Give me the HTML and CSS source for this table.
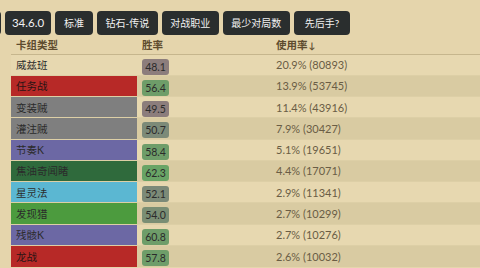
FILE: index.html
```html
<!DOCTYPE html>
<html lang="zh">
<head>
<meta charset="utf-8">
<title>卡组统计</title>
<link rel="stylesheet" href="styles.css">
</head>
<body>
<nav class="filters">
  <button class="chip chip-cut" aria-label="更多"></button>
  <button class="chip chip-num">34.6.0</button>
  <button class="chip chip-short">标准</button>
  <button class="chip">钻石-传说</button>
  <button class="chip">对战职业</button>
  <button class="chip">最少对局数</button>
  <button class="chip chip-wide">先后手?</button>
</nav>
<table class="stats">
  <thead>
    <tr>
      <th class="col-deck">卡组类型</th>
      <th class="col-wr">胜率</th>
      <th class="col-use">使用率<span class="arrow">↓</span></th>
    </tr>
  </thead>
  <tbody>
    <tr><td class="deck">威兹班</td><td class="col-wr"><span class="wr wr-low">48.1</span></td><td class="use">20.9% (80893)</td></tr>
    <tr><td class="deck warrior">任务战</td><td class="col-wr"><span class="wr wr-good">56.4</span></td><td class="use">13.9% (53745)</td></tr>
    <tr><td class="deck rogue">变装贼</td><td class="col-wr"><span class="wr wr-low">49.5</span></td><td class="use">11.4% (43916)</td></tr>
    <tr><td class="deck rogue">灌注贼</td><td class="col-wr"><span class="wr wr-mid">50.7</span></td><td class="use">7.9% (30427)</td></tr>
    <tr><td class="deck warlock">节奏K</td><td class="col-wr"><span class="wr wr-good">58.4</span></td><td class="use">5.1% (19651)</td></tr>
    <tr><td class="deck druid">焦油奇闻睹</td><td class="col-wr"><span class="wr wr-top">62.3</span></td><td class="use">4.4% (17071)</td></tr>
    <tr><td class="deck mage">星灵法</td><td class="col-wr"><span class="wr wr-mid">52.1</span></td><td class="use">2.9% (11341)</td></tr>
    <tr><td class="deck hunter">发现猎</td><td class="col-wr"><span class="wr wr-mid2">54.0</span></td><td class="use">2.7% (10299)</td></tr>
    <tr><td class="deck warlock">残骸K</td><td class="col-wr"><span class="wr wr-good">60.8</span></td><td class="use">2.7% (10276)</td></tr>
    <tr><td class="deck warrior">龙战</td><td class="col-wr"><span class="wr wr-good">57.8</span></td><td class="use">2.6% (10032)</td></tr>
  </tbody>
</table>
</body>
</html>
```
FILE: styles.css
```css
html, body {
  margin: 0;
  padding: 0;
  background: #e5d5ac;
  overflow: hidden;
  font-family: Lato, "Noto Sans CJK SC", sans-serif;
}

/* filter chips */
.filters {
  display: flex;
  gap: 4px;
  padding-top: 11px;
  margin-left: -41px;
  white-space: nowrap;
}
.chip {
  flex: none;
  box-sizing: border-box;
  height: 24px;
  padding: 0 8.5px;
  border: 0;
  border-radius: 4px;
  background: #2a2e2e;
  color: #f2f2f2;
  font-family: Lato, "Noto Sans CJK SC", sans-serif;
  font-size: 10px;
  line-height: 24px;
}
.chip-num {
  width: 46px;
  padding: 0;
  font-size: 11.5px;
}
.chip-short {
  padding: 0 9px;
}
.chip-wide {
  padding: 0 11px;
}
.chip-cut {
  width: 42px;
  padding: 0;
}

/* stats table */
.stats {
  margin-left: 11px;
  width: 469px;
  border-collapse: collapse;
  table-layout: fixed;
}
.stats th,
.stats td {
  box-sizing: border-box;
  padding: 0 0 0 5px;
}
.stats th {
  height: 19px;
  text-align: left;
  font-weight: 700;
  font-size: 10.5px;
  color: #5e4c2f;
  border-bottom: 1.5px solid #c6b68d;
  vertical-align: middle;
}
.col-deck { width: 126px; }
.col-wr { width: 134px; }
.arrow {
  font-size: 9px;
  margin-left: 1px;
}

.stats tbody tr {
  height: 21.25px;
  background: #e7d8b0;
}
.stats tbody tr:nth-child(even) {
  background: #d9cba2;
}
.stats td {
  vertical-align: middle;
  border-top: 1px solid #ddcfa6;
}
.deck {
  font-size: 10.5px;
  color: #2b2b2b;
}
.use {
  font-size: 11px;
  color: #6a5d45;
}

/* class colours */
.warrior { background: #b72927; color: #2a1414; }
.rogue { background: #7f7f7f; }
.warlock { background: #6c68a4; }
.druid { background: #2f6a3c; }
.mage { background: #5bb7d2; }
.hunter { background: #4c9b3e; }

/* win rate badges */
.wr {
  display: inline-block;
  width: 27px;
  height: 16px;
  line-height: 16px;
  border-radius: 3px;
  text-align: center;
  font-size: 10.5px;
  color: #2b2b2b;
  vertical-align: middle;
}
.wr-low { background: #8c7d7c; }
.wr-mid { background: #7c8a78; }
.wr-mid2 { background: #7a8e74; }
.wr-good { background: #6e9d69; }
.wr-top { background: #69a466; }
```
